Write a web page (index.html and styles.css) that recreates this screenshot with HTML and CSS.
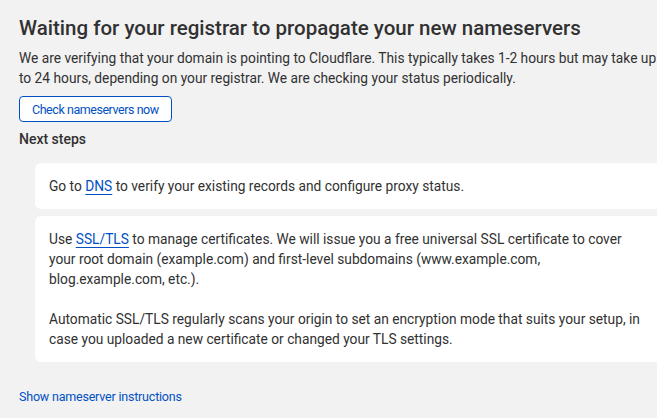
FILE: index.html
```html
<!DOCTYPE html>
<html lang="en">
<head>
  <meta charset="UTF-8" />
  <meta name="viewport" content="width=device-width, initial-scale=1" />
  <title>Nameserver propagation</title>
  <link rel="stylesheet" href="styles.css">
</head>
<body>
  <div class="page">
    <h1>Waiting for your registrar to propagate your new nameservers</h1>
    <p class="intro">We are verifying that your domain is pointing to Cloudflare. This typically takes 1-2 hours but may take up to 24 hours, depending on your registrar. We are checking your status periodically.</p>

    <button class="btn-outline" type="button">Check nameservers now</button>

    <h2>Next steps</h2>

    <div class="steps">
      <div class="step-card">
        <p>Go to <a href="#">DNS</a> to verify your existing records and configure proxy status.</p>
      </div>
      <div class="step-card">
        <p>Use <a href="#">SSL/TLS</a> to manage certificates. We will issue you a free universal SSL certificate to cover your root domain (example.com) and first-level subdomains (www.example.com, blog.example.com, etc.).</p>
        <p>Automatic SSL/TLS regularly scans your origin to set an encryption mode that suits your setup, in case you uploaded a new certificate or changed your TLS settings.</p>
      </div>
    </div>

    <a class="toggle-link" href="#">Show nameserver instructions</a>
  </div>
</body>
</html>
```

FILE: styles.css
```css
html, body {
  margin: 0;
  overflow: hidden;
}

body {
  background: #f2f2f2;
  color: #313131;
  font-family: Roboto, "Noto Sans", sans-serif;
  font-size: 13.75px;
  line-height: 20px;
}

.page {
  width: 645px;
  padding: 14px 0 0 19px;
}

h1 {
  margin: 0;
  font-size: 20.5px;
  line-height: 28px;
  font-weight: 500;
  color: #313131;
}

.intro {
  margin: 6px 0 0;
}

.btn-outline {
  display: block;
  margin-top: 8px;
  height: 26px;
  padding: 0 12px;
  background: #fff;
  border: 1px solid #0051c3;
  border-radius: 4px;
  color: #0051c3;
  font-family: inherit;
  font-size: 12.5px;
  letter-spacing: -0.45px;
  cursor: pointer;
}

h2 {
  margin: 7px 0 0;
  font-size: 14px;
  line-height: 20px;
  font-weight: 500;
}

.steps {
  display: flex;
  flex-direction: column;
  gap: 7px;
  margin: 14px 0 0 16px;
}

.step-card {
  background: #fff;
  border-radius: 6px;
  padding: 13px 14px;
}

.step-card p {
  margin: 0;
}

.step-card p + p {
  margin-top: 20px;
}

.step-card a {
  color: #0051c3;
  text-decoration: underline;
  text-underline-offset: 3px;
}

.toggle-link {
  display: inline-block;
  margin-top: 25px;
  color: #0051c3;
  font-size: 12.5px;
  letter-spacing: -0.2px;
  text-decoration: none;
}
```
